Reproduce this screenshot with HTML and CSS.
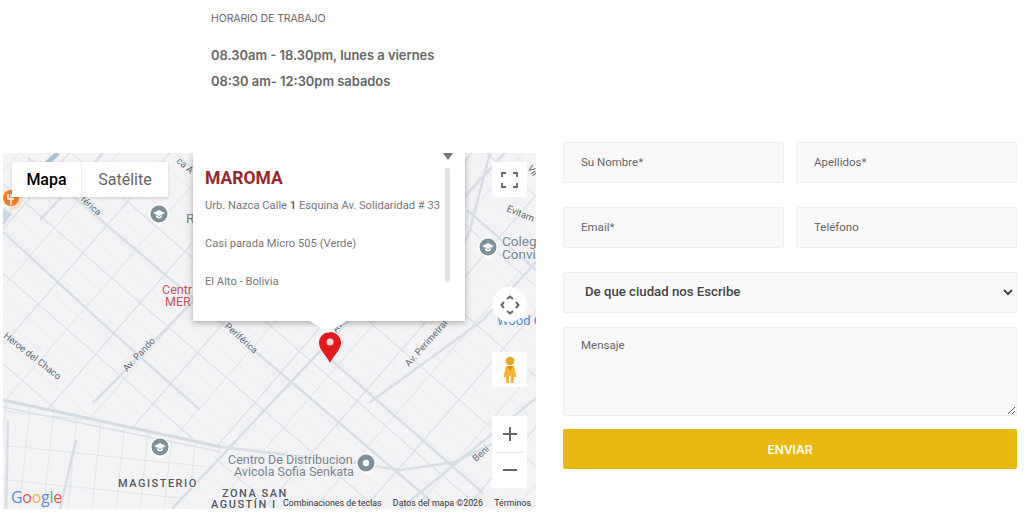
FILE: index.html
```html
<!DOCTYPE html>
<html lang="es">
<head>
<meta charset="utf-8">
<title>Maroma - Contacto</title>
<link rel="stylesheet" href="styles.css">
</head>
<body>
<section class="hours">
  <h4 class="hours-title">HORARIO DE TRABAJO</h4>
  <p class="hours-line">08.30am - 18.30pm, lunes a viernes</p>
  <p class="hours-line">08:30 am- 12:30pm sabados</p>
</section>
<section class="contact">
  <div class="map">
    <svg class="map-canvas" viewBox="3 153 533 356" width="533" height="356">
      <defs>
        <pattern id="blocks" width="38" height="17" patternUnits="userSpaceOnUse" patternTransform="rotate(41)">
          <path d="M0 0V17" stroke="#dde2e7" stroke-width="1.600" fill="none"/>
          <path d="M0 0H38" stroke="#e4e7eb" stroke-width="1.100" fill="none"/>
        </pattern>
        <pattern id="mid" width="76" height="68" patternUnits="userSpaceOnUse" patternTransform="rotate(41)">
          <path d="M0 0H76M0 0V68" stroke="#d9e0e6" stroke-width="2.200" fill="none"/>
        </pattern>
        <pattern id="south" width="24" height="34" patternUnits="userSpaceOnUse" patternTransform="rotate(6)">
          <path d="M0 0H24M0 0V34" stroke="#d9dfe5" stroke-width="1.500" fill="none"/>
        </pattern>
        <clipPath id="north"><path d="M3 153H536V509H172L221 447L3 400Z"/></clipPath>
        <clipPath id="southwest"><path d="M3 402L221 449L172 509H3Z"/></clipPath>
      </defs>
      <rect x="3" y="153" width="533" height="356" fill="#f3f3f5"/>
      <g clip-path="url(#north)">
        <rect x="3" y="153" width="533" height="356" fill="url(#blocks)"/>
        <rect x="3" y="153" width="533" height="356" fill="url(#mid)"/>
      </g>
      <rect x="3" y="400" width="220" height="109" fill="url(#south)" clip-path="url(#southwest)"/>
      <g class="roads">
        <path d="M172 509L321 350L480 180L536 118"/>
        <path d="M93 403L165 330L270 222"/>
        <path d="M28 158L262 357L438 507"/>
        <path d="M331 360L483 493"/>
        <path d="M369 403L483 320L536 262"/>
        <path d="M400 509L536 398"/>
        <path d="M3 232L110 330L200 410"/>
        <path d="M103 153L40 220"/>
        <path d="M467 210L536 270"/>
        <path d="M490 153L470 230L430 320"/>
        <path d="M8 420L6 509M76 440L60 509"/>
        <path d="M221 447L350 462L400 470L455 462L500 440"/>
      </g>
      <path class="rail" d="M3 400L221 447"/>
      <path class="rail-thin" d="M3 407L221 452"/>
      <path class="blue-road" d="M45 165L58 153"/>
      <path class="orange-pin" d="M2 190H14A8 8 0 0 1 10 210Z"/>
      <path d="M3 208L12 214L3 226Z" fill="#c9d8e6"/>
      <circle cx="11" cy="198" r="8" fill="#ed7b25"/>
      <path d="M8 194V199H14M11 194V205" stroke="#fff" stroke-width="1.400" fill="none"/>

      <g transform="translate(159 214)">
        <path d="M-10 0A10 10 0 1 1 10 0C10 6 4 9 0 12C-4 9 -10 6 -10 0Z" fill="#fff"/>
        <circle r="8.500" fill="#7b9099"/>
        <path d="M-6 -1L0 -4L6 -1L0 2ZM-3 1V3C-1 5 1 5 3 3V1L0 3Z" fill="#fff"/>
      </g>
      <g transform="translate(488 247)">
        <path d="M-10 0A10 10 0 1 1 10 0C10 6 4 9 0 12C-4 9 -10 6 -10 0Z" fill="#fff"/>
        <circle r="8.500" fill="#7b9099"/>
        <path d="M-6 -1L0 -4L6 -1L0 2ZM-3 1V3C-1 5 1 5 3 3V1L0 3Z" fill="#fff"/>
      </g>
      <g transform="translate(160 447)">
        <path d="M-10 0A10 10 0 1 1 10 0C10 6 4 9 0 12C-4 9 -10 6 -10 0Z" fill="#fff"/>
        <circle r="8.500" fill="#7b9099"/>
        <path d="M-6 -1L0 -4L6 -1L0 2ZM-3 1V3C-1 5 1 5 3 3V1L0 3Z" fill="#fff"/>
      </g>
      <g transform="translate(366 463)">
        <path d="M-10 0A10 10 0 1 1 10 0C10 6 4 9 0 12C-4 9 -10 6 -10 0Z" fill="#fff"/>
        <circle r="8.500" fill="#7b9099"/>
        <circle r="3.200" fill="#fff"/>
      </g>

      <text class="lbl-road" transform="translate(176 162) rotate(40)">ca A</text>
      <text class="lbl-road" transform="translate(80 200) rotate(42)">férica</text>
      <text class="lbl-road" transform="translate(3 337) rotate(38)">Heroe del Chaco</text>
      <text class="lbl-road" transform="translate(127 372) rotate(-47)">Av. Pando</text>
      <text class="lbl-road" transform="translate(224 327) rotate(42)">Periférica</text>
      <text class="lbl-road" transform="translate(336 333) rotate(-45)">Av.</text>
      <text class="lbl-road" transform="translate(409 367) rotate(-48)">Av. Perimetral</text>
      <text class="lbl-road" transform="translate(476 462) rotate(-42)">Beni</text>
      <text class="lbl-road" transform="translate(506 211) rotate(22)">Evitam</text>
      <text class="lbl-road" transform="translate(527 168) rotate(55)">Vil</text>
      <text class="lbl-poi" x="186" y="223">R</text>
      <text class="lbl-red" x="162" y="294">Centr</text>
      <text class="lbl-red" x="165" y="306">MER</text>
      <text class="lbl-poi" x="502" y="246">Colegi</text>
      <text class="lbl-poi" x="502" y="259">Convif</text>
      <text class="lbl-blue" x="497" y="325">Wood C</text>
      <text class="lbl-poi lbl-sm" x="228" y="464">Centro De Distribucion</text>
      <text class="lbl-poi lbl-sm" x="234" y="476">Avicola Sofia Senkata</text>
      <text class="lbl-area" x="118" y="487">MAGISTERIO</text>
      <text class="lbl-area" x="222" y="497">ZONA SAN</text>
      <text class="lbl-area" x="211" y="508">AGUSTÍN I</text>

      <path class="pin" d="M330 332C323.500 332 319 337 319 343C319 350 327 356 330 363C333 356 341 350 341 343C341 337 336.500 332 330 332Z"/>
      <circle cx="330" cy="342" r="3.500" fill="#f0d9d9"/>
    </svg>

    <div class="map-type">
      <span class="map-type-on">Mapa</span>
      <span class="map-type-off">Satélite</span>
    </div>

    <div class="popup">
      <h3 class="popup-title">MAROMA</h3>
      <p class="popup-line">Urb. Nazca Calle <b>1</b> Esquina Av. Solidaridad # 33</p>
      <p class="popup-line">Casi parada Micro 505 (Verde)</p>
      <p class="popup-line">El Alto - Bolivia</p>
      <span class="popup-arrow"></span>
      <span class="popup-thumb"></span>
    </div>
    <span class="popup-tail"></span>

    <button class="ctl ctl-full" aria-label="Pantalla completa">
      <svg width="17" height="16" viewBox="0 0 17 16"><path d="M1 5V1H5M12 1H16V5M16 11V15H12M5 15H1V11" fill="none" stroke="#666" stroke-width="1.800"/></svg>
    </button>
    <button class="ctl ctl-move" aria-label="Mover">
      <svg width="20" height="20" viewBox="0 0 20 20"><path d="M7 4L10 1.500L13 4M7 16L10 18.500L13 16M4 7L1.500 10L4 13M16 7L18.500 10L16 13" fill="none" stroke="#666" stroke-width="2"/></svg>
    </button>
    <button class="ctl ctl-peg" aria-label="Street View">
      <svg width="16" height="28" viewBox="0 0 16 28">
        <circle cx="8" cy="5" r="4.300" fill="#eea422"/>
        <path d="M4 10H12L14.500 21H12L11.500 27H8.800V20H7.200V27H4.500L4 21H1.500Z" fill="#f5b52e"/>
        <path d="M5.500 10L8 15L10.500 10Z" fill="#e2841d"/>
      </svg>
    </button>
    <div class="ctl-zoom">
      <button class="ctl-zoom-btn" aria-label="Acercar"><svg width="16" height="16" viewBox="0 0 16 16"><path d="M8 1V15M1 8H15" stroke="#666" stroke-width="2"/></svg></button>
      <span class="ctl-zoom-sep"></span>
      <button class="ctl-zoom-btn" aria-label="Alejar"><svg width="16" height="16" viewBox="0 0 16 16"><path d="M1 8H15" stroke="#666" stroke-width="2"/></svg></button>
    </div>
    <div class="google"><span class="g-b">G</span><span class="g-r">o</span><span class="g-y">o</span><span class="g-b">g</span><span class="g-g">l</span><span class="g-r">e</span></div>
    <div class="attrib">
      <span>Combinaciones de teclas</span>
      <span>Datos del mapa ©2026</span>
      <span>Términos</span>
    </div>
  </div>

  <form class="form">
    <div class="form-row">
      <input class="field" type="text" placeholder="Su Nombre*">
      <input class="field" type="text" placeholder="Apellidos*">
    </div>
    <div class="form-row">
      <input class="field" type="email" placeholder="Email*">
      <input class="field" type="tel" placeholder="Teléfono">
    </div>
    <select class="field city">
      <option>De que ciudad nos Escribe</option>
    </select>
    <textarea class="field message" placeholder="Mensaje"></textarea>
    <button class="send" type="button">ENVIAR</button>
  </form>
</section>
</body>
</html>
```

FILE: styles.css
```css
* { box-sizing: border-box; }
html, body { margin: 0; padding: 0; }
body {
  width: 1024px;
  height: 527px;
  overflow: hidden;
  background: #fff;
  font-family: Roboto, "Liberation Sans", sans-serif;
}

.hours { padding: 12px 0 0 211px; height: 142px; font-family: Inter, "Open Sans", sans-serif; }
.hours-title {
  margin: 0 0 23px;
  font-size: 10.500px;
  line-height: 13px;
  font-weight: 400;
  color: #666;
  letter-spacing: -0.1px;
}
.hours-line {
  margin: 0 0 10px;
  font-size: 12.900px;
  line-height: 16px;
  font-weight: 600;
  color: #666;
}

.contact { display: flex; align-items: flex-start; padding-left: 3px; }

.map { position: relative; width: 533px; height: 356px; margin-top: 11px; overflow: hidden; flex: none; }
.map-canvas { display: block; }
.roads path { fill: none; stroke: #d8dfe6; stroke-width: 2.600; }
.rail { fill: none; stroke: #d4dbe2; stroke-width: 3; }
.rail-thin { fill: none; stroke: #dbe1e7; stroke-width: 1.500; }
.blue-road { stroke: #a9c1d6; stroke-width: 5; fill: none; }
.orange-pin { fill: #f6e3cf; }
.pin { fill: #e3191c; }

.lbl-road { font: 9.500px Roboto, sans-serif; fill: #5d6b75; stroke: #f3f3f5; stroke-width: 2px; paint-order: stroke; }
.lbl-poi { font: 13.500px Roboto, sans-serif; fill: #78858e; stroke: #f3f3f5; stroke-width: 2px; paint-order: stroke; }
.lbl-sm { font-size: 12.500px; }
.lbl-red { font: 12.500px Roboto, sans-serif; fill: #c5525e; }
.lbl-blue { font: 13px Roboto, sans-serif; fill: #4b8fd0; }
.lbl-area { font: 500 11px Roboto, sans-serif; letter-spacing: 1.500px; fill: #535a60; stroke: #f3f3f5; stroke-width: 2px; paint-order: stroke; }

.map-type {
  position: absolute; left: 9px; top: 9px;
  display: flex; height: 35px;
  background: #fff;
  box-shadow: 0 1px 3px rgba(0,0,0,.15);
  font-size: 16px;
  line-height: 35px;
}
.map-type-on { width: 70px; text-align: center; color: #000; font-weight: 500; border-right: 1px solid #f0f0f0; }
.map-type-off { width: 86px; text-align: center; color: #666; }

.popup {
  position: absolute; left: 190px; top: 0;
  width: 272px; height: 168px;
  padding: 13px 0 0 12px;
  background: #fff;
  box-shadow: 0 2px 6px rgba(0,0,0,.3);
}
.popup-title { margin: 0 0 8px; font-size: 17.500px; line-height: 24px; font-weight: 700; color: #952a2e; }
.popup-line { margin: 0 0 22px; font-size: 11.200px; line-height: 16px; color: #777; white-space: nowrap; }
.popup-line b { font-weight: 500; color: #555; }
.popup-arrow {
  position: absolute; left: 250px; top: 0;
  border-left: 5px solid transparent; border-right: 5px solid transparent;
  border-top: 7px solid #777;
}
.popup-thumb { position: absolute; left: 252px; top: 15px; width: 5px; height: 114px; background: #e2e2e2; border-radius: 2px; }
.popup-tail {
  position: absolute; left: 307px; top: 168px;
  border-left: 18px solid transparent; border-right: 18px solid transparent;
  border-top: 12px solid #fff;
}

.ctl { position: absolute; width: 35px; height: 35px; padding: 0; border: 0; background: #fff; display: flex; align-items: center; justify-content: center; }
.ctl-full { left: 489px; top: 9px; }
.ctl-move { left: 489px; top: 134px; border-radius: 50%; }
.ctl-peg { left: 489px; top: 199px; }
.ctl-zoom { position: absolute; left: 489px; top: 263px; width: 35px; height: 72px; background: #fff; display: flex; flex-direction: column; align-items: center; }
.ctl-zoom-btn { flex: 1; width: 35px; padding: 0; border: 0; background: none; display: flex; align-items: center; justify-content: center; }
.ctl-zoom-sep { width: 27px; height: 1px; background: #e6e6e6; flex: none; }

.google { position: absolute; left: 8px; top: 333px; font: 500 16px "Open Sans", Roboto, sans-serif; line-height: 22px; letter-spacing: -0.3px; }
.g-b { color: #5b8fdc; }
.g-r { color: #e0584b; }
.g-y { color: #ecb93a; }
.g-g { color: #57ae6a; }

.attrib { position: absolute; left: 280px; top: 344px; width: 248px; display: flex; justify-content: space-between; font-size: 8.800px; line-height: 12px; color: #333; white-space: nowrap; }

.form { width: 454px; margin-left: 27px; display: flex; flex-direction: column; }
.form-row { display: flex; gap: 12px; margin-bottom: 24px; }
.field {
  display: block;
  width: 100%;
  height: 41px;
  min-width: 0;
  padding: 0 17px 1px;
  background: #f9f9f9;
  border: 1px solid #eee;
  border-radius: 2px;
  font: 11.500px Roboto, sans-serif;
  color: #666;
  outline: 0;
}
.field::placeholder { color: #666; opacity: 1; }
.city { margin-bottom: 14px; font-size: 13.200px; font-weight: 500; color: #444; padding: 0 17px 2px; }
.message { height: 89px; padding-top: 10px; margin-bottom: 13px; resize: vertical; }
.send {
  height: 40px; border: 0; border-radius: 2px; padding: 0;
  background: #e9b90f; color: #fff;
  font: 600 12px Inter, sans-serif;
}
```
